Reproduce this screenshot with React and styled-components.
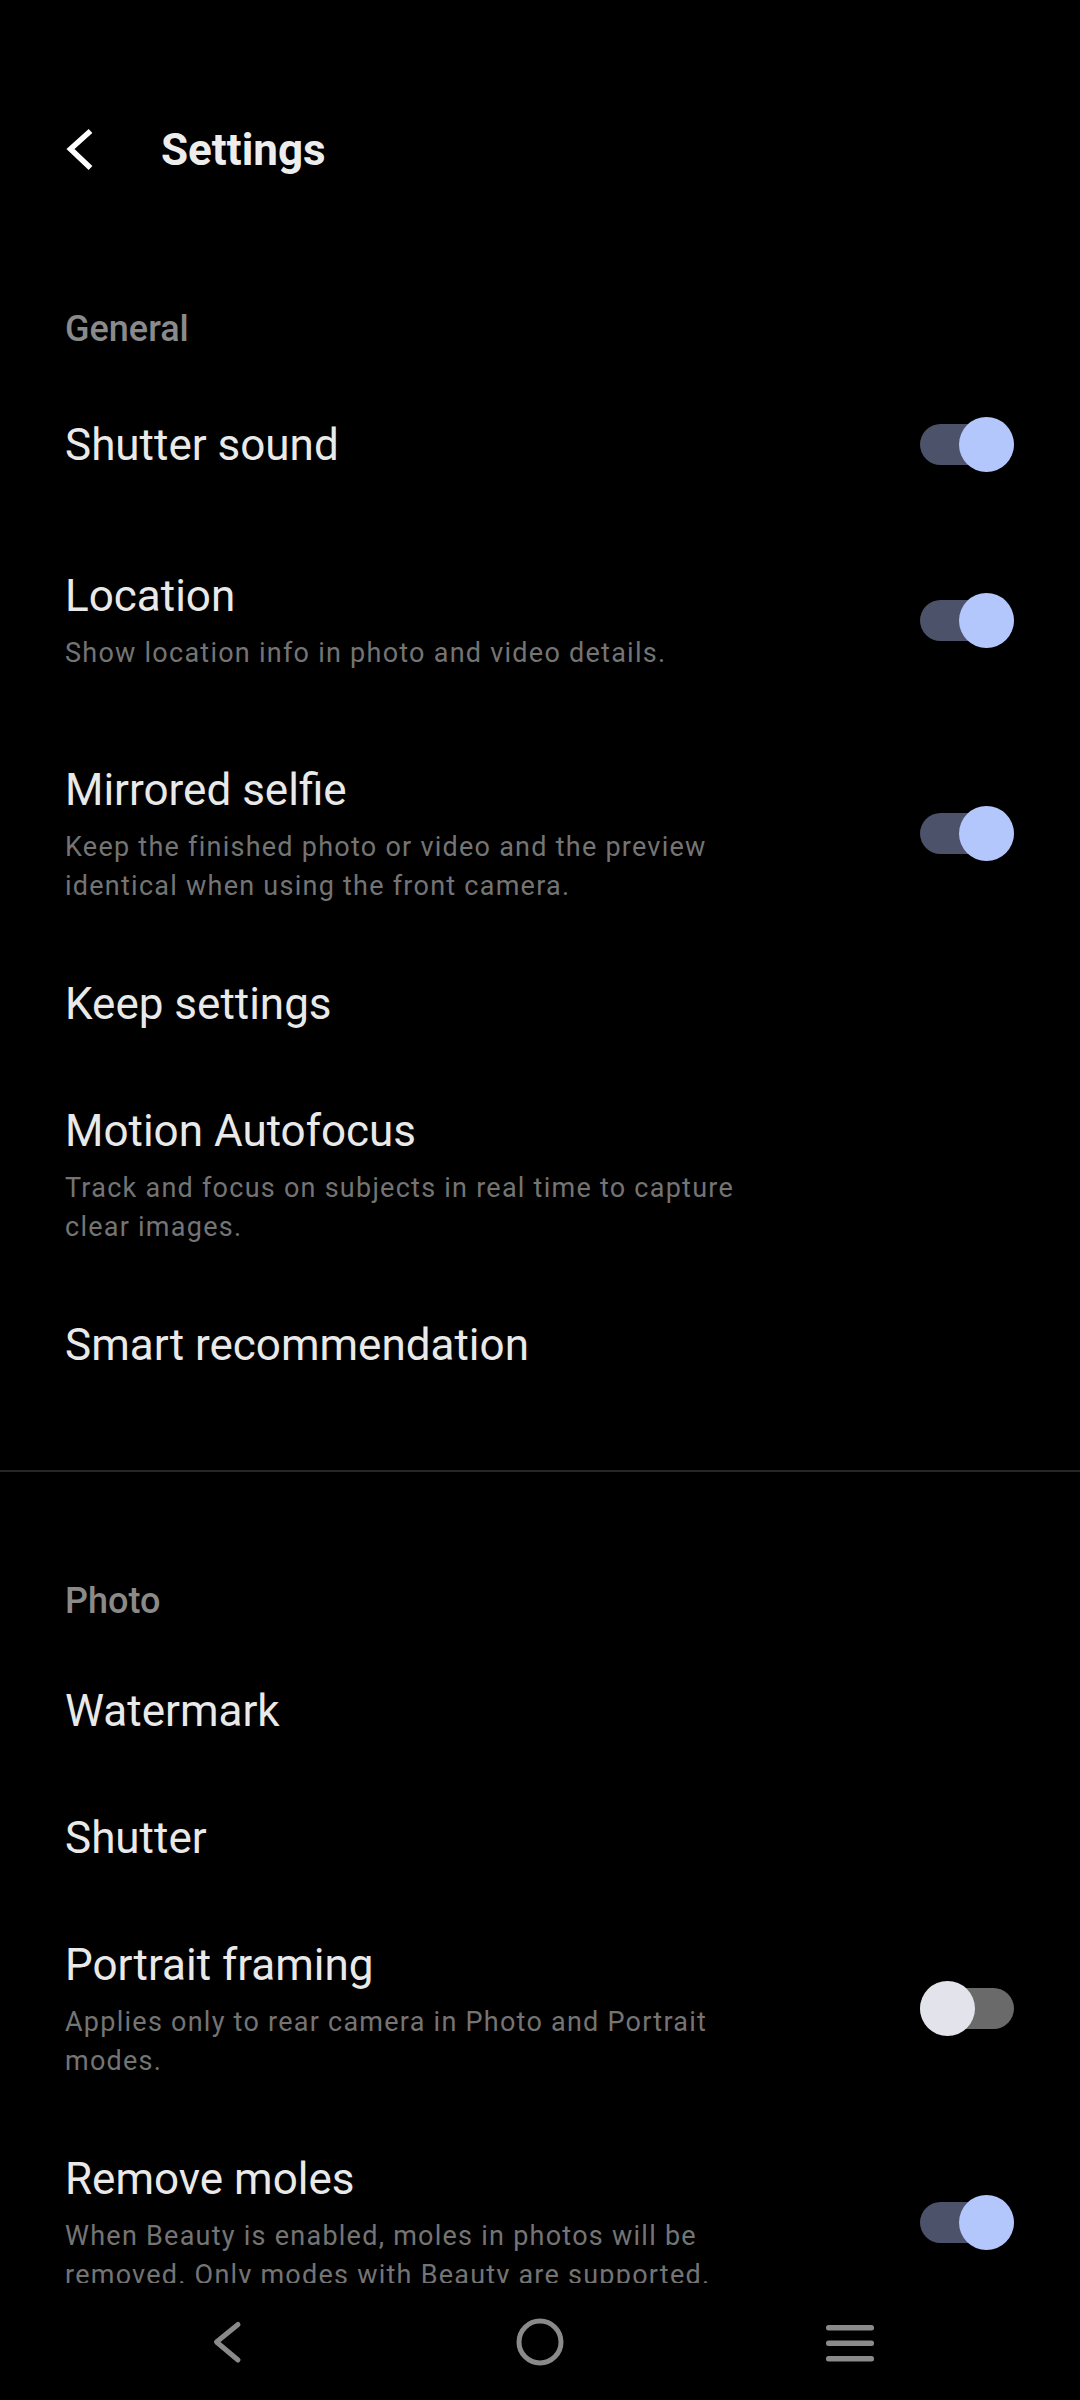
import styled, { createGlobalStyle } from 'styled-components';

const GlobalStyle = createGlobalStyle`
  html, body {
    margin: 0;
    padding: 0;
    background: #000;
  }
  body {
    font-family: Roboto, "Noto Sans", "Liberation Sans", sans-serif;
  }
  * {
    box-sizing: border-box;
  }
`;

const general = [
  { title: 'Shutter sound', toggle: true, on: true, minHeight: 138 },
  { title: 'Location', sub: 'Show location info in photo and video details.', toggle: true, on: true, minHeight: 213 },
  { title: 'Mirrored selfie', sub: 'Keep the finished photo or video and the preview identical when using the front camera.', toggle: true, on: true },
  { title: 'Keep settings' },
  { title: 'Motion Autofocus', sub: 'Track and focus on subjects in real time to capture clear images.' },
  { title: 'Smart recommendation' },
];

const photo = [
  { title: 'Watermark' },
  { title: 'Shutter' },
  { title: 'Portrait framing', sub: 'Applies only to rear camera in Photo and Portrait modes.', toggle: true, on: false },
  { title: 'Remove moles', sub: 'When Beauty is enabled, moles in photos will be removed. Only modes with Beauty are supported.', toggle: true, on: true },
];

const BackIcon = () => (
  <svg width="34" height="46" viewBox="0 0 34 46" fill="none">
    <path d="M28.5 4 L8.5 22 L28.5 41" stroke="#fff" strokeWidth="5.5" strokeLinejoin="miter" />
  </svg>
);

const NavBack = () => (
  <svg width="48" height="48" viewBox="0 0 48 48" fill="none">
    <path d="M32 6.5 L10.5 24 L32 42" stroke="#8a8a8a" strokeWidth="5" strokeLinecap="round" strokeLinejoin="round" />
  </svg>
);

const NavHome = () => (
  <svg width="48" height="48" viewBox="0 0 48 48" fill="none">
    <circle cx="24" cy="24" r="21" stroke="#8a8a8a" strokeWidth="5" />
  </svg>
);

const NavRecents = () => (
  <svg width="48" height="48" viewBox="0 0 48 48" fill="#8a8a8a">
    <rect x="0" y="7" width="48" height="5.5" rx="2.5" />
    <rect x="0" y="22.5" width="48" height="5.5" rx="2.5" />
    <rect x="0" y="38" width="48" height="5.5" rx="2.5" />
  </svg>
);

const Toggle = ({ on }) => (
  <SwitchWrap>
    <Track $on={on} />
    <Knob $on={on} />
  </SwitchWrap>
);

const SettingRow = ({ item }) => (
  <Row $minHeight={item.minHeight}>
    <TextBlock>
      <Title>{item.title}</Title>
      {item.sub && <Sub>{item.sub}</Sub>}
    </TextBlock>
    {item.toggle && <Toggle on={item.on} />}
  </Row>
);

const App = () => {
  return (
    <Screen>
      <GlobalStyle />
      <Content>
        <Header>
          <BackIcon />
          <HeaderTitle>Settings</HeaderTitle>
        </Header>

        <Section $bottom={61}>
          <SectionTitle>General</SectionTitle>
          {general.map((item) => (
            <SettingRow key={item.title} item={item} />
          ))}
        </Section>

        <Divider />

        <Section>
          <SectionTitle>Photo</SectionTitle>
          {photo.map((item) => (
            <SettingRow key={item.title} item={item} />
          ))}
        </Section>
      </Content>

      <NavBar>
        <NavBack />
        <NavHome />
        <NavRecents />
      </NavBar>
    </Screen>
  );
};

const Screen = styled.div`
  width: 1080px;
  height: 2400px;
  background: #000;
  display: flex;
  flex-direction: column;
  overflow: hidden;
`;

const Content = styled.div`
  height: 2283px;
  overflow: hidden;
  flex-shrink: 0;
`;

const Header = styled.div`
  display: flex;
  align-items: center;
  gap: 65px;
  height: 60px;
  margin-top: 120px;
  margin-bottom: 20px;
  padding-left: 62px;
`;

const HeaderTitle = styled.h1`
  margin: 0;
  font-size: 44px;
  line-height: 60px;
  font-weight: 700;
  color: #ededed;
`;

const Section = styled.section`
  padding-top: 105px;
  padding-bottom: ${(p) => p.$bottom || 0}px;
`;

const SectionTitle = styled.div`
  padding-left: 65px;
  margin-bottom: 23px;
  font-size: 36px;
  line-height: 48px;
  font-weight: 500;
  color: #8a8a8a;
`;

const Row = styled.div`
  display: flex;
  align-items: center;
  padding: 34px 66px 35px 65px;
  min-height: ${(p) => p.$minHeight || 0}px;
`;

const TextBlock = styled.div`
  flex: 1;
  max-width: 700px;
  margin-right: auto;
`;

const Title = styled.div`
  font-size: 44px;
  line-height: 58px;
  color: #e9e9e9;
`;

const Sub = styled.div`
  margin-top: 9px;
  font-size: 27px;
  line-height: 39px;
  letter-spacing: 1.25px;
  color: #747474;
`;

const SwitchWrap = styled.div`
  position: relative;
  flex-shrink: 0;
  width: 94px;
  height: 55px;
  display: flex;
  align-items: center;
`;

const Track = styled.div`
  width: 100%;
  height: 41px;
  border-radius: 21px;
  background: ${(p) => (p.$on ? '#4b5269' : '#6a6a6a')};
`;

const Knob = styled.div`
  position: absolute;
  top: 0;
  ${(p) => (p.$on ? 'right: 0;' : 'left: 0;')}
  width: 55px;
  height: 55px;
  border-radius: 50%;
  background: ${(p) => (p.$on ? '#b3c7fd' : '#e3e3ec')};
`;

const Divider = styled.div`
  height: 2px;
  background: #262626;
`;

const NavBar = styled.nav`
  flex: 1;
  display: flex;
  align-items: center;
  justify-content: center;
  gap: 262px;
`;

export default App;
